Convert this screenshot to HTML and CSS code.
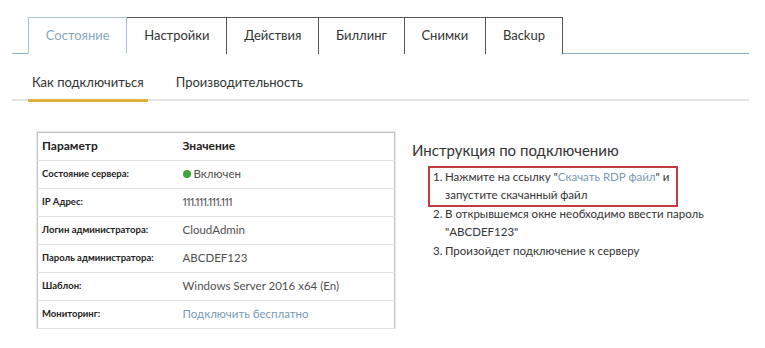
FILE: index.html
```html
<!DOCTYPE html>
<html lang="ru">
<head>
<meta charset="utf-8">
<link rel="stylesheet" href="styles.css">
</head>
<body>
<div class="page">
  <div class="tabs">
    <div class="tab active">Состояние</div>
    <div class="tab">Настройки</div>
    <div class="tab">Действия</div>
    <div class="tab">Биллинг</div>
    <div class="tab">Снимки</div>
    <div class="tab">Backup</div>
  </div>
  <div class="subtabs">
    <div class="subtab active">Как подключиться</div>
    <div class="subtab">Производительность</div>
  </div>
  <div class="content">
    <table class="params">
      <tr class="head"><th>Параметр</th><th>Значение</th></tr>
      <tr><td class="label">Состояние сервера:</td><td><span class="dot"></span>Включен</td></tr>
      <tr><td class="label">IP Адрес:</td><td class="ip">111.111.111.111</td></tr>
      <tr><td class="label">Логин администратора:</td><td>CloudAdmin</td></tr>
      <tr><td class="label">Пароль администратора:</td><td>ABCDEF123</td></tr>
      <tr><td class="label">Шаблон:</td><td>Windows Server 2016 x64 (En)</td></tr>
      <tr><td class="label">Мониторинг:</td><td><a class="link">Подключить бесплатно</a></td></tr>
    </table>
    <div class="instr">
      <h2>Инструкция по подключению</h2>
      <ol>
        <li class="hl"><span>Нажмите на ссылку "<a class="link">Скачать RDP файл</a>" и<br>запустите скачанный файл</span></li>
        <li><span>В открывшемся окне необходимо ввести пароль<br>"ABCDEF123"</span></li>
        <li><span>Произойдет подключение к серверу</span></li>
      </ol>
    </div>
  </div>
</div>
</body>
</html>
```
FILE: styles.css
```css
* { box-sizing: border-box; }
body {
  margin: 0;
  background: #fff;
  font-family: Lato, "Noto Sans", sans-serif;
  color: #333;
}
.page {
  width: 737px;
  margin-left: 12px;
  padding-top: 17px;
}
.tabs {
  display: flex;
  padding-left: 16px;
  border-bottom: 1px solid #8fb0bc;
  height: 37px;
}
.tab {
  height: 37px;
  border: 1px solid #555;
  border-left: none;
  border-bottom: none;
  font-size: 13px;
  line-height: 35px;
  padding: 0 16.8px;
  color: #333;
  background: #fff;
}
.tab.active {
  border: 1px solid #a9c3cf;
  border-bottom: 1px solid #fff;
  color: #8aa6b8;
}
.subtabs {
  display: flex;
  gap: 24px;
  padding-left: 16px;
  margin-top: 19px;
  border-bottom: 2px solid #e4e4e4;
  height: 28px;
}
.subtab {
  font-size: 13px;
  line-height: 18px;
  padding: 0 4px;
  color: #333;
  height: 28px;
}
.subtab.active {
  border-bottom: 3px solid #e0b03a;
  margin-bottom: -2px;
  height: 29px;
}
.content {
  display: flex;
  padding-left: 25px;
  margin-top: 31px;
}
.params {
  border-collapse: collapse;
  width: 358px;
  border: 1px solid #c4c4c4;
  box-shadow: 0 0 0 1px #ececec;
}
.params th, .params td {
  height: 28px;
  padding: 0 0 3px 4px;
  text-align: left;
  border-bottom: 1px solid #e3e3e3;
  vertical-align: middle;
}
.params th {
  font-size: 12px;
  font-weight: 700;
  color: #222;
}
.params th:first-child, .params td.label { width: 141px; }
.params td {
  font-size: 11.5px;
  color: #505050;
}
.params td.label {
  font-size: 9.5px;
  font-weight: 700;
  color: #222;
}
.params td.ip {
  font-size: 11px;
  letter-spacing: -0.6px;
  font-variant-numeric: proportional-nums;
}
.dot {
  display: inline-block;
  width: 8px;
  height: 8px;
  border-radius: 50%;
  background: #3fa43a;
  margin-right: 3px;
  vertical-align: 0;
}
.link { color: #7a9ab3; text-decoration: none; }
.instr {
  margin-left: 17px;
  padding-top: 8px;
}
.instr h2 {
  font-size: 15px;
  font-weight: 400;
  margin: 0 0 8px 0;
  color: #333;
  line-height: 20px;
}
.instr ol {
  margin: 0;
  padding-left: 21px;
  list-style: none;
  counter-reset: step;
  font-size: 11.5px;
  line-height: 18.4px;
  color: #333;
}
.instr li {
  display: flex;
  counter-increment: step;
}
.instr li::before {
  content: counter(step) ".";
  width: 12px;
  flex: none;
}
.instr li.hl {
  border: 2px solid #c33a3f;
  width: 250px;
  margin: -2px 0 -2px -5px;
  padding: 0 3px;
}
```
